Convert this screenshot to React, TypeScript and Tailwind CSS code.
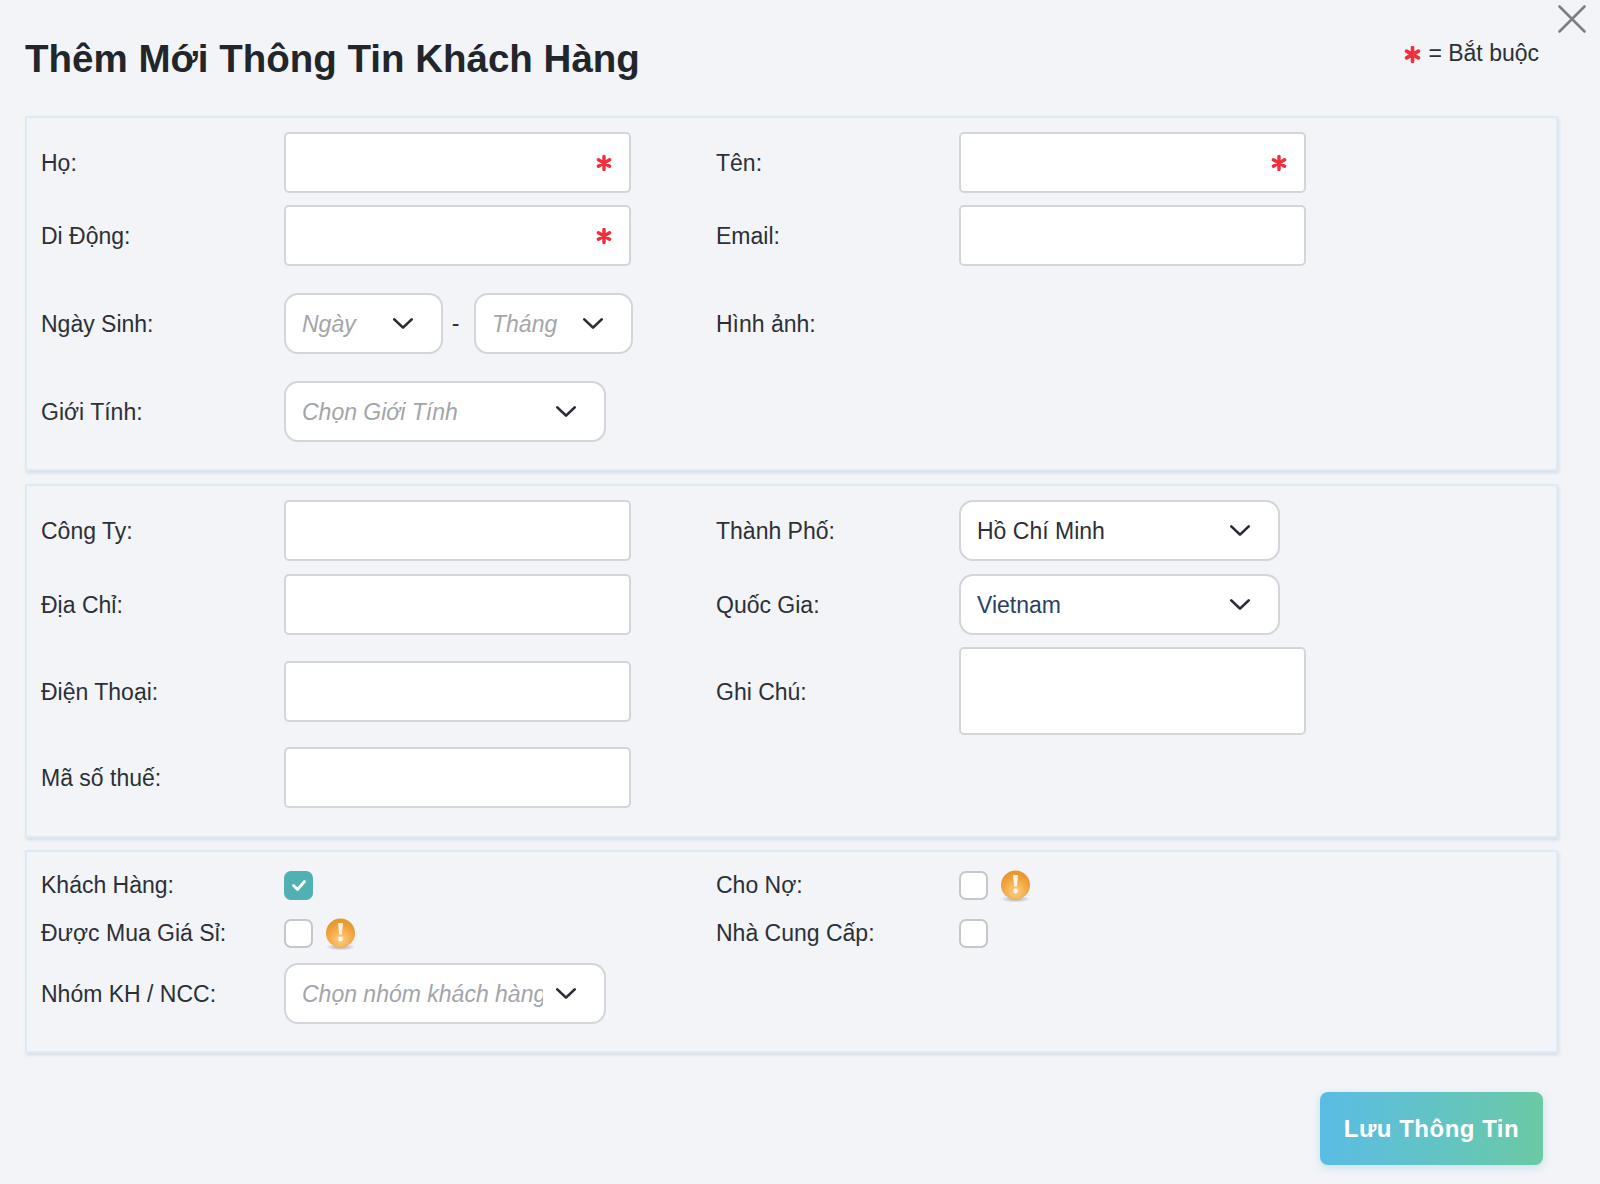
import type { ReactNode } from 'react'

const FONT = "font-['Liberation_Sans',Arial,sans-serif]"

function Star({ className = 'w-[16px] h-[16px]' }: { className?: string }) {
  return (
    <svg viewBox="0 0 16 16" className={className} stroke="#ef2f3c" strokeWidth="3.4" strokeLinecap="round">
      <path d="M8 1.5v13M2.4 4.8l11.2 6.4M13.6 4.8L2.4 11.2" />
    </svg>
  )
}

function Chevron() {
  return (
    <svg viewBox="0 0 24 14" className="w-[22px] h-[13px] shrink-0" fill="none" stroke="#2a2e33" strokeWidth="3" strokeLinecap="round" strokeLinejoin="round">
      <path d="M2.5 2.5L12 11.5l9.5-9" />
    </svg>
  )
}

function Warn() {
  return (
    <svg viewBox="0 0 32 38" className="w-[32px] h-[38px] shrink-0 ml-[12px] mt-[2px]">
      <defs>
        <radialGradient id="warnFill" cx="50%" cy="72%" r="62%">
          <stop offset="0%" stopColor="#fccf88" />
          <stop offset="60%" stopColor="#f4ab47" />
          <stop offset="100%" stopColor="#e8982f" />
        </radialGradient>
        <radialGradient id="warnShade" cx="50%" cy="50%" r="50%">
          <stop offset="0%" stopColor="#000" stopOpacity="0.32" />
          <stop offset="100%" stopColor="#000" stopOpacity="0" />
        </radialGradient>
        <filter id="warnSoft">
          <feGaussianBlur stdDeviation="0.7" />
        </filter>
      </defs>
      <ellipse cx="15.5" cy="32" rx="15" ry="3.5" fill="url(#warnShade)" />
      <circle cx="15.5" cy="18" r="14.5" fill="url(#warnFill)" />
      <g filter="url(#warnSoft)" fill="#fff" fillOpacity="0.85">
        <path d="M13 8h5l-1.1 11.5h-2.8z" />
        <circle cx="15.5" cy="24" r="2.4" />
      </g>
    </svg>
  )
}

function Label({ children, className = 'pt-[2px]' }: { children: ReactNode; className?: string }) {
  return <span className={`w-[243px] shrink-0 text-[23px] leading-none text-[#2c3036] ${className}`}>{children}</span>
}

function TextBox({ required, tall }: { required?: boolean; tall?: boolean }) {
  return (
    <div className={`relative w-[347px] ${tall ? 'h-[88px]' : 'h-[61px]'}`}>
      <input readOnly className="w-full h-full bg-white border-2 border-[#d2d5da] rounded-[5px] outline-none" />
      {required && <Star className="absolute right-[19px] top-[23px] w-[16px] h-[16px]" />}
    </div>
  )
}

function Select({ text, width, placeholder, dark }: { text: string; width: string; placeholder?: boolean; dark?: boolean }) {
  return (
    <div className={`${width} h-[61px] flex items-center pl-[16px] pr-[27px] bg-white border-2 border-[#d2d5da] rounded-[14px]`}>
      <span className={`flex-1 min-w-0 mr-[12px] pt-[2px] overflow-hidden whitespace-nowrap text-[23px] ${placeholder ? 'italic text-[#a3a5a9]' : dark ? 'text-[#2a3f66]' : 'text-[#2c3036]'}`}>
        {text}
      </span>
      <Chevron />
    </div>
  )
}

function Check({ checked }: { checked?: boolean }) {
  if (checked) {
    return (
      <div className="w-[29px] h-[29px] rounded-[7px] bg-[#50b0b4] flex items-center justify-center">
        <svg viewBox="0 0 16 16" className="w-[16px] h-[16px]" fill="none" stroke="#fff" strokeWidth="2.8" strokeLinecap="round" strokeLinejoin="round">
          <path d="M2.5 8.5L6.5 12.5 13.5 4.5" />
        </svg>
      </div>
    )
  }
  return <div className="w-[29px] h-[29px] rounded-[7px] bg-white border-2 border-[#c6c7c9]" />
}

function Panel({ children, className = '' }: { children: ReactNode; className?: string }) {
  return (
    <section className={`border-2 border-[#dfebf4] shadow-[1px_2px_3px_rgba(120,140,160,0.22)] pl-[14px] ${className}`}>
      {children}
    </section>
  )
}

function Row({ children, className = '' }: { children: ReactNode; className?: string }) {
  return <div className={`flex items-center ${className}`}>{children}</div>
}

function Cell({ children }: { children: ReactNode }) {
  return <div className="w-[675px] shrink-0 flex items-center">{children}</div>
}

export default function App() {
  return (
    <div className={`relative w-[1600px] h-[1184px] bg-[#f2f4f8] overflow-hidden ${FONT}`}>
      <button className="absolute left-[1558px] top-[5px] w-[28px] h-[28px]">
        <svg viewBox="0 0 28 28" className="w-full h-full" stroke="#7d7f82" strokeWidth="2.6" strokeLinecap="round">
          <path d="M1.5 1.5l25 25M26.5 1.5l-25 25" />
        </svg>
      </button>

      <div className="ml-[25px] w-[1533px]">
        <header className="h-[116px] flex justify-between">
          <h1 className="mt-[37px] text-[38.5px] leading-[44px] font-bold text-[#22262b] whitespace-nowrap">Thêm Mới Thông Tin Khách Hàng</h1>
          <div className="mt-[39px] mr-[19px] h-[28px] flex items-center gap-[7px] text-[23px] text-[#2c3036]">
            <Star className="w-[17px] h-[17px] mt-[3px]" />
            <span>= Bắt buộc</span>
          </div>
        </header>

        <Panel className="h-[355px] pt-[14px]">
          <Row>
            <Cell><Label>Họ:</Label><TextBox required /></Cell>
            <Label>Tên:</Label><TextBox required />
          </Row>
          <Row className="mt-[12px]">
            <Cell><Label>Di Động:</Label><TextBox required /></Cell>
            <Label>Email:</Label><TextBox />
          </Row>
          <Row className="mt-[27px]">
            <Cell>
              <Label>Ngày Sinh:</Label>
              <Select text="Ngày" width="w-[159px]" placeholder />
              <span className="w-[31px] pr-[6px] text-center text-[23px] text-[#2c3036]">-</span>
              <Select text="Tháng" width="w-[159px]" placeholder />
            </Cell>
            <Label>Hình ảnh:</Label>
          </Row>
          <Row className="mt-[27px]">
            <Cell><Label>Giới Tính:</Label><Select text="Chọn Giới Tính" width="w-[322px]" placeholder /></Cell>
          </Row>
        </Panel>

        <Panel className="h-[354px] mt-[13px] pt-[14px]">
          <Row>
            <Cell><Label>Công Ty:</Label><TextBox /></Cell>
            <Label>Thành Phố:</Label><Select text="Hồ Chí Minh" width="w-[321px]" />
          </Row>
          <Row className="mt-[13px]">
            <Cell><Label>Địa Chỉ:</Label><TextBox /></Cell>
            <Label>Quốc Gia:</Label><Select text="Vietnam" width="w-[321px]" dark />
          </Row>
          <Row className="mt-[12px]">
            <Cell><Label>Điện Thoại:</Label><TextBox /></Cell>
            <Label>Ghi Chú:</Label><TextBox tall />
          </Row>
          <Row className="mt-[12px]">
            <Cell><Label>Mã số thuế:</Label><TextBox /></Cell>
          </Row>
        </Panel>

        <Panel className="h-[203px] mt-[12px] pt-[18px]">
          <Row className="h-[30px]">
            <Cell><Label className="">Khách Hàng:</Label><Check checked /></Cell>
            <Label className="">Cho Nợ:</Label><Check /><Warn />
          </Row>
          <Row className="h-[30px] mt-[18px]">
            <Cell><Label className="">Được Mua Giá Sỉ:</Label><Check /><Warn /></Cell>
            <Label className="">Nhà Cung Cấp:</Label><Check />
          </Row>
          <Row className="mt-[15px]">
            <Cell><Label>Nhóm KH / NCC:</Label><Select text="Chọn nhóm khách hàng" width="w-[322px]" placeholder /></Cell>
          </Row>
        </Panel>

        <div className="mt-[39px] mr-[15px] flex justify-end">
          <button className="w-[223px] h-[73px] rounded-[8px] bg-gradient-to-r from-[#5bbce5] to-[#6bc9a4] shadow-[0_3px_8px_rgba(100,190,200,0.3)] text-white font-bold text-[24px] tracking-[0.5px]">
            Lưu Thông Tin
          </button>
        </div>
      </div>
    </div>
  )
}
